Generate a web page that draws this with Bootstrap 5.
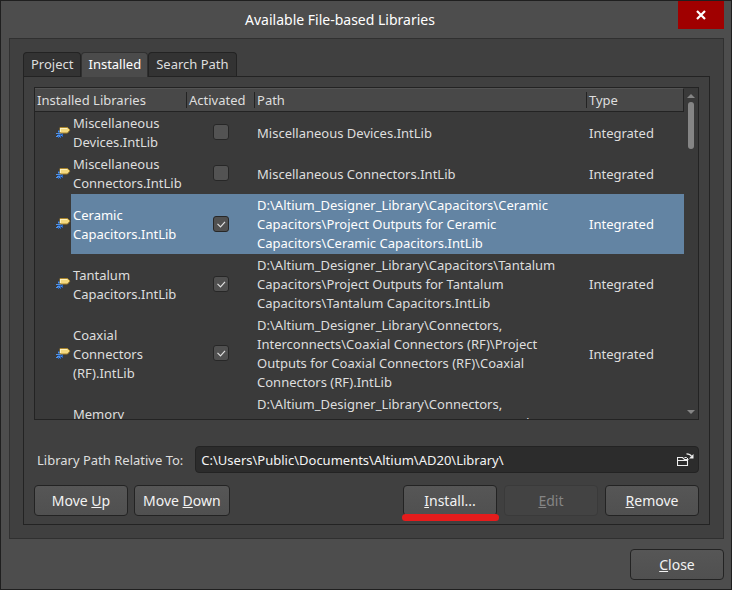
<!DOCTYPE html>
<html lang="en">
<head>
<meta charset="utf-8">
<meta name="viewport" content="width=device-width, initial-scale=1">
<title>Available File-based Libraries</title>
<link href="https://cdn.jsdelivr.net/npm/bootstrap@5.3.0/dist/css/bootstrap.min.css" rel="stylesheet">
<style>
:root { --edge: #232323; --ink: #dedede; }
body { font-family: "Noto Sans", "Open Sans", sans-serif; font-size: 13px; line-height: 19px; color: var(--ink); background: #4d4d4d; }
.dialog { height: 100vh; min-height: 480px; border: 1px solid #1f1f1f; padding: 0 7px 9px 8px; }
.titlebar { height: 37px; }
.titlebar h1 { font-size: 14px; line-height: 37px; font-weight: 400; color: #fff; padding-right: 7px; }
.close-x { width: 46px; height: 28px; background: #a00000; border: 0; }
.panel { background: #404040; border: 1px solid #303030; padding: 13px; min-height: 0; }
.tabs { --bs-nav-tabs-border-width: 0; border: 0; }
.tabs .nav-link { height: 24px; line-height: 22px; padding: 0 7px; margin: 0; color: var(--ink); background: #333; border: 1px solid var(--edge); border-bottom: 0; border-radius: 4px 4px 0 0; }
.tabs .nav-link.active { height: 25px; margin-bottom: -1px; padding: 0 6px; background: #4b4b4b; color: #fff; border-color: #303030; position: relative; }
.tab-page { border: 1px solid var(--edge); padding: 10px 10px 8px; min-height: 0; }
.list { border: 1px solid var(--edge); background: #3a3a3a; flex: 1 1 0; min-height: 0; }
.rows { overflow: hidden; }
.libs { width: 100%; table-layout: fixed; border-collapse: separate; border-spacing: 0; }
.libs th { height: 24px; padding: 0 2px; font-weight: 400; background: #484848; border-bottom: 1px solid var(--edge); border-top: 1px solid #545454; position: relative; white-space: nowrap; }
.libs th + th::before { content: ""; position: absolute; left: -1px; top: 3px; bottom: 3px; width: 1px; background: var(--edge); }
.libs th:last-child { border-right: 1px solid var(--edge); }
.libs td { padding: 2px 2px 1px; vertical-align: middle; }
.libs td:first-child { padding: 0 0 2px; }
.libs td:nth-child(3) { padding: 0 2px 1px; }
.libs td.path { padding-right: 24px; }
.libs tr.current td:not(:first-child) { background: #6384a3; color: #fff; }
.c-icon { width: 36px; } .c-name { width: 116px; } .c-act { width: 68px; } .c-type { width: 97px; }
.libs svg { display: block; margin-left: auto; }
.tick.form-check-input { width: 16px; height: 16px; margin: 0; display: block; border: 1px solid #272727; border-radius: 3px; background-color: #535353; box-shadow: none; }
.tick.form-check-input:checked { background: #505050 url("data:image/svg+xml,%3Csvg xmlns='http://www.w3.org/2000/svg' viewBox='0 0 14 14'%3E%3Cpath d='M3.5 6.8l3 3 4.5-5' fill='none' stroke='%23dddddd' stroke-width='1.2'/%3E%3C/svg%3E") center / 14px no-repeat; border-color: #272727; }
.scroll { width: 14px; padding: 5px 0 4px; }
.thumb { width: 6px; height: 47px; border-radius: 3px; background: #858585; }
.path-row { margin-top: 26px; gap: 12px; padding-left: 3px; }
.path-row label { padding-top: 2px; }
.path-box { height: 27px; background: #2c2c2c; border: 1px solid var(--edge); border-radius: 4px; }
.path-box .form-control { font-size: 13px; line-height: 19px; padding: 0 5px; height: 25px; color: #f4f4f4; background: transparent; border: 0; min-width: 0; }
.path-box .browse { background: none; border: 0; padding: 0 4px; }
.actions { margin-top: 12px; gap: 6px; }
.push { min-width: 94px; height: 31px; padding: 0 8px; font-size: 14px; line-height: 19px; color: #f2f2f2; background: linear-gradient(#565656, #505050); border: 1px solid var(--edge); border-radius: 4px; }
.push:hover { color: #fff; background: #5a5a5a; border-color: var(--edge); }
.push:disabled { color: #858585; background: #434343; border-color: #3a3a3a; opacity: 1; }
.push + .push.spaced { margin-left: 1px; }
.flagged { position: relative; }
.flagged::after { content: ""; position: absolute; left: -2px; right: -3px; bottom: -6px; height: 7px; border-radius: 4px; background: #e51c1c; }
.foot { margin-top: 10px; }
</style>
</head>
<body>
<svg class="d-none" xmlns="http://www.w3.org/2000/svg">
  <symbol id="lib" viewBox="0 0 15 12">
    <path d="M2 4h5v6H2z" fill="#2458a8"/>
    <path d="M2 5.500h3M0 7.500h5M1 9.500h5M0 10.500h4" stroke="#4f92e8" stroke-width="1"/>
    <path d="M2.500 10v2M4.500 9v3M6.500 8v3" stroke="#2c66bd"/>
    <path d="M4 1.500h7.500l2.500 2.500-2.500 3H4z" fill="#f3d980" stroke="#a8842c" stroke-width="1"/>
    <path d="M5 2.500h6M4.500 2v4" stroke="#fff2bd"/>
  </symbol>
</svg>
<main class="dialog d-flex flex-column">
  <header class="titlebar d-flex align-items-start flex-shrink-0">
    <h1 class="flex-grow-1 text-center mb-0">Available File-based Libraries</h1>
    <button type="button" class="close-x d-flex align-items-center justify-content-center p-0" aria-label="Close window">
      <svg width="10" height="10" viewBox="0 0 10 10"><path d="M1 1l8 8M9 1L1 9" stroke="#fff" stroke-width="2.200"/></svg>
    </button>
  </header>

  <section class="panel d-flex flex-column flex-grow-1">
    <ul class="nav nav-tabs tabs flex-shrink-0">
      <li class="nav-item"><a class="nav-link" href="#project">Project</a></li>
      <li class="nav-item"><a class="nav-link active" aria-current="page" href="#installed">Installed</a></li>
      <li class="nav-item"><a class="nav-link" href="#search">Search Path</a></li>
    </ul>
    <div class="tab-page d-flex flex-column flex-grow-1" id="installed">
      <div class="list d-flex">
        <div class="rows flex-grow-1">
          <table class="libs">
            <colgroup><col class="c-icon"><col class="c-name"><col class="c-act"><col><col class="c-type"></colgroup>
            <thead><tr><th colspan="2" scope="col">Installed Libraries</th><th scope="col">Activated</th><th scope="col">Path</th><th scope="col">Type</th></tr></thead>
            <tbody>
              <tr><td><svg width="15" height="12"><use href="#lib"/></svg></td><td>Miscellaneous Devices.IntLib</td><td><input class="form-check-input tick mx-auto" type="checkbox" aria-label="Activate Miscellaneous Devices"></td><td class="path">Miscellaneous Devices.IntLib</td><td>Integrated</td></tr>
              <tr><td><svg width="15" height="12"><use href="#lib"/></svg></td><td>Miscellaneous Connectors.IntLib</td><td><input class="form-check-input tick mx-auto" type="checkbox" aria-label="Activate Miscellaneous Connectors"></td><td class="path">Miscellaneous Connectors.IntLib</td><td>Integrated</td></tr>
              <tr class="current"><td><svg width="15" height="12"><use href="#lib"/></svg></td><td>Ceramic Capacitors.IntLib</td><td><input class="form-check-input tick mx-auto" type="checkbox" checked aria-label="Activate Ceramic Capacitors"></td><td class="path">D:\Altium_Designer_Library\Capacitors\Ceramic Capacitors\Project Outputs for Ceramic Capacitors\Ceramic Capacitors.IntLib</td><td>Integrated</td></tr>
              <tr><td><svg width="15" height="12"><use href="#lib"/></svg></td><td>Tantalum Capacitors.IntLib</td><td><input class="form-check-input tick mx-auto" type="checkbox" checked aria-label="Activate Tantalum Capacitors"></td><td class="path">D:\Altium_Designer_Library\Capacitors\Tantalum Capacitors\Project Outputs for Tantalum Capacitors\Tantalum Capacitors.IntLib</td><td>Integrated</td></tr>
              <tr><td><svg width="15" height="12"><use href="#lib"/></svg></td><td>Coaxial Connectors (RF).IntLib</td><td><input class="form-check-input tick mx-auto" type="checkbox" checked aria-label="Activate Coaxial Connectors (RF)"></td><td class="path">D:\Altium_Designer_Library\Connectors, Interconnects\Coaxial Connectors (RF)\Project Outputs for Coaxial Connectors (RF)\Coaxial Connectors (RF).IntLib</td><td>Integrated</td></tr>
              <tr><td></td><td>Memory<br>&nbsp;</td><td></td><td class="path">D:\Altium_Designer_Library\Connectors, Interconnects\Memory Connectors - PC Card<br>&nbsp;</td><td></td></tr>
            </tbody>
          </table>
        </div>
        <div class="scroll d-flex flex-column align-items-center flex-shrink-0" aria-hidden="true">
          <svg class="mb-1" width="8" height="5" viewBox="0 0 8 5"><path d="M0 5l4-4 4 4z" fill="#858585"/></svg>
          <div class="thumb"></div>
          <svg class="mt-auto" width="8" height="5" viewBox="0 0 8 5"><path d="M0 0h8L4 4z" fill="#858585"/></svg>
        </div>
      </div>

      <div class="path-row d-flex align-items-center flex-shrink-0">
        <label for="base">Library Path Relative To:</label>
        <div class="path-box d-flex flex-grow-1">
          <input id="base" type="text" class="form-control shadow-none" value="C:\Users\Public\Documents\Altium\AD20\Library\">
          <button type="button" class="browse d-flex align-items-center" aria-label="Browse">
            <svg width="17" height="13" viewBox="0 0 17 13" fill="none" stroke="#f0f0f0"><path d="M.5 12.500v-8h5l2 2h3v6H.5zM.5 7.500h10.500" stroke-width="1.100"/><path d="M7.500 4.500h2l2 2" stroke-width="1"/><path d="M9.500.800c2.500 0 4 .7 5 2.500" stroke-width="1.300"/><path d="M16.500 1v4.500H12z" fill="#f0f0f0" stroke="none"/></svg>
          </button>
        </div>
      </div>

      <div class="actions d-flex flex-shrink-0">
        <button type="button" class="btn push">Move <u>U</u>p</button>
        <button type="button" class="btn push">Move <u>D</u>own</button>
        <button type="button" class="btn push flagged ms-auto"><u>I</u>nstall...</button>
        <button type="button" class="btn push spaced" disabled><u>E</u>dit</button>
        <button type="button" class="btn push spaced"><u>R</u>emove</button>
      </div>
    </div>
  </section>

  <footer class="foot d-flex justify-content-end flex-shrink-0">
    <button type="button" class="btn push"><u>C</u>lose</button>
  </footer>
</main>
<script src="https://cdn.jsdelivr.net/npm/bootstrap@5.3.0/dist/js/bootstrap.bundle.min.js"></script>
</body>
</html>
